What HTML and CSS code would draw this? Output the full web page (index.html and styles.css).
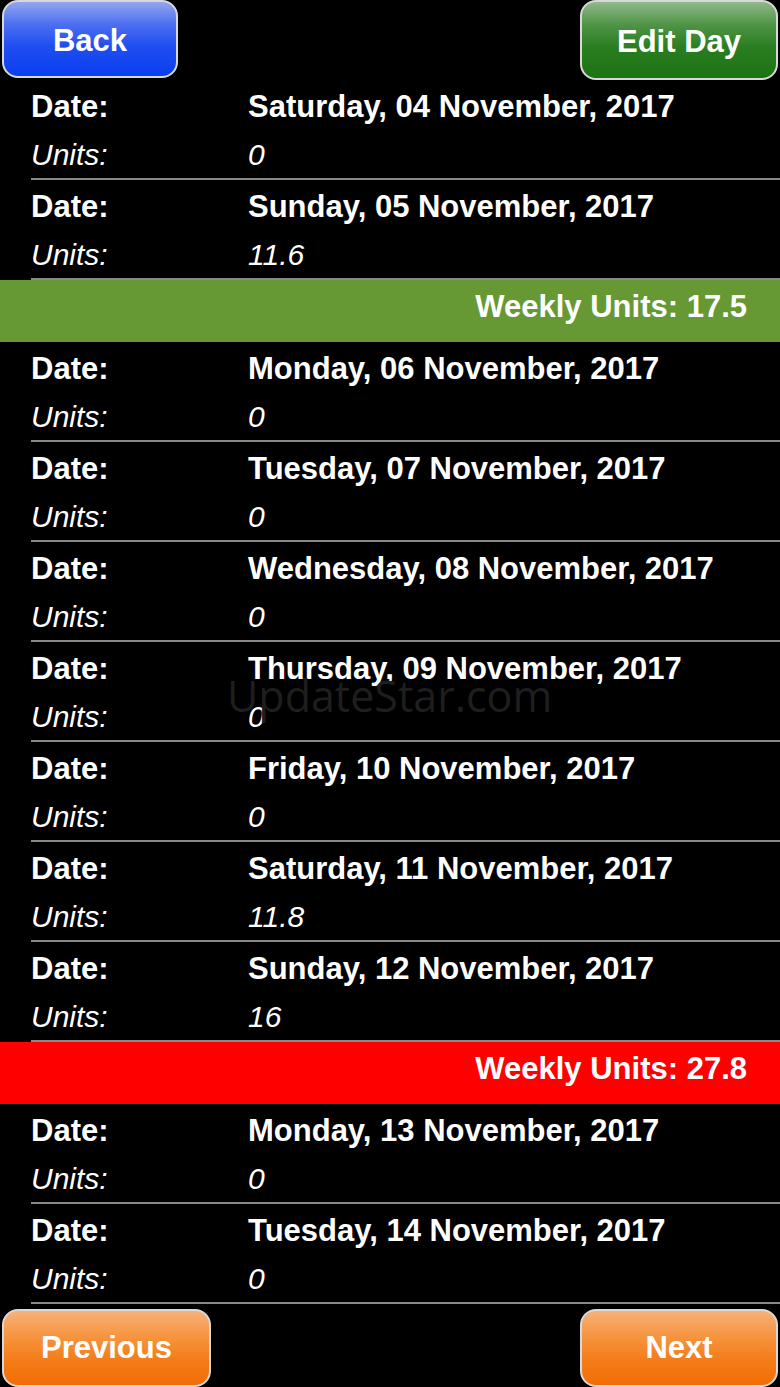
FILE: index.html
```html
<!DOCTYPE html>
<html lang="en">
<head>
    <meta charset="UTF-8">
    <meta name="viewport" content="width=device-width, initial-scale=1.0">
    <title>Units Log</title>
    <link rel="stylesheet" href="styles.css">
</head>
<body>
    <div class="screen">
        <div class="top-bar">
            <button class="btn btn-blue btn-back">Back</button>
            <button class="btn btn-green btn-edit">Edit Day</button>
        </div>

        <div class="log">
            <div class="day">
                <div class="line"><span class="label">Date:</span><span class="value">Saturday, 04 November, 2017</span></div>
                <div class="line units"><span class="label">Units:</span><span class="value">0</span></div>
            </div>
            <div class="day">
                <div class="line"><span class="label">Date:</span><span class="value">Sunday, 05 November, 2017</span></div>
                <div class="line units"><span class="label">Units:</span><span class="value">11.6</span></div>
            </div>
            <div class="week week-ok">Weekly Units: 17.5</div>
            <div class="day">
                <div class="line"><span class="label">Date:</span><span class="value">Monday, 06 November, 2017</span></div>
                <div class="line units"><span class="label">Units:</span><span class="value">0</span></div>
            </div>
            <div class="day">
                <div class="line"><span class="label">Date:</span><span class="value">Tuesday, 07 November, 2017</span></div>
                <div class="line units"><span class="label">Units:</span><span class="value">0</span></div>
            </div>
            <div class="day">
                <div class="line"><span class="label">Date:</span><span class="value">Wednesday, 08 November, 2017</span></div>
                <div class="line units"><span class="label">Units:</span><span class="value">0</span></div>
            </div>
            <div class="day">
                <div class="line"><span class="label">Date:</span><span class="value">Thursday, 09 November, 2017</span></div>
                <div class="line units"><span class="label">Units:</span><span class="value">0</span></div>
            </div>
            <div class="day">
                <div class="line"><span class="label">Date:</span><span class="value">Friday, 10 November, 2017</span></div>
                <div class="line units"><span class="label">Units:</span><span class="value">0</span></div>
            </div>
            <div class="day">
                <div class="line"><span class="label">Date:</span><span class="value">Saturday, 11 November, 2017</span></div>
                <div class="line units"><span class="label">Units:</span><span class="value">11.8</span></div>
            </div>
            <div class="day">
                <div class="line"><span class="label">Date:</span><span class="value">Sunday, 12 November, 2017</span></div>
                <div class="line units"><span class="label">Units:</span><span class="value">16</span></div>
            </div>
            <div class="week week-over">Weekly Units: 27.8</div>
            <div class="day">
                <div class="line"><span class="label">Date:</span><span class="value">Monday, 13 November, 2017</span></div>
                <div class="line units"><span class="label">Units:</span><span class="value">0</span></div>
            </div>
            <div class="day">
                <div class="line"><span class="label">Date:</span><span class="value">Tuesday, 14 November, 2017</span></div>
                <div class="line units"><span class="label">Units:</span><span class="value">0</span></div>
            </div>
        </div>

        <div class="bottom-bar">
            <button class="btn btn-orange btn-prev">Previous</button>
            <button class="btn btn-orange btn-next">Next</button>
        </div>

        <div class="watermark">UpdateStar.com</div>
    </div>
</body>
</html>
```

FILE: styles.css
```css
body {
    margin: 0;
    background: #000;
    font-family: "Liberation Sans", Arial, sans-serif;
    color: #fff;
}
.screen {
    position: relative;
    width: 780px;
    height: 1387px;
    overflow: hidden;
    background: #000;
}
.top-bar,
.bottom-bar {
    display: flex;
    justify-content: space-between;
    align-items: flex-start;
    padding: 0 2px;
}
.top-bar {
    height: 80px;
}
.bottom-bar {
    height: 84px;
    padding-top: 5px;
    box-sizing: border-box;
}
.btn {
    border: 2px solid #d8d8d8;
    border-radius: 16px;
    color: #fff;
    font-family: "Liberation Sans", Arial, sans-serif;
    font-weight: bold;
    font-size: 31px;
    padding: 0;
    height: 78px;
    box-sizing: border-box;
}
.btn-back {
    width: 176px;
    padding-top: 3px;
}
.btn-edit {
    width: 198px;
    height: 80px;
    padding-top: 3px;
}
.btn-prev {
    width: 209px;
}
.btn-next {
    width: 198px;
}
.btn-blue {
    background: linear-gradient(#93a7f0 0%, #4d6ff0 30%, #1f4ef0 60%, #0a3ff0 100%);
}
.btn-green {
    background: linear-gradient(#8fb98a 0%, #4f9446 30%, #2a7d20 60%, #1c7412 100%);
}
.btn-orange {
    background: linear-gradient(#f6b27a 0%, #f6943f 35%, #f47d1a 65%, #f26d04 100%);
}
.day {
    height: 100px;
    position: relative;
}
.day::after {
    content: "";
    position: absolute;
    left: 31px;
    right: 0;
    bottom: 0;
    height: 2px;
    background: #8a8a8a;
}
.line {
    display: flex;
    height: 42px;
    align-items: center;
    font-size: 31px;
    font-weight: bold;
}
.line:first-child {
    height: 54px;
}
.label {
    width: 217px;
    padding-left: 31px;
}
.units {
    font-weight: normal;
    font-style: italic;
    font-size: 30px;
}
.week {
    height: 62px;
    line-height: 54px;
    text-align: right;
    padding-right: 33px;
    font-weight: bold;
    font-size: 31px;
}
.week-ok {
    background: #669933;
}
.week-over {
    background: #ff0000;
}
.watermark {
    position: absolute;
    left: 227px;
    top: 666px;
    font-family: "Open Sans", sans-serif;
    font-size: 43px;
    color: #1e1e1e;
    pointer-events: none;
}
```
